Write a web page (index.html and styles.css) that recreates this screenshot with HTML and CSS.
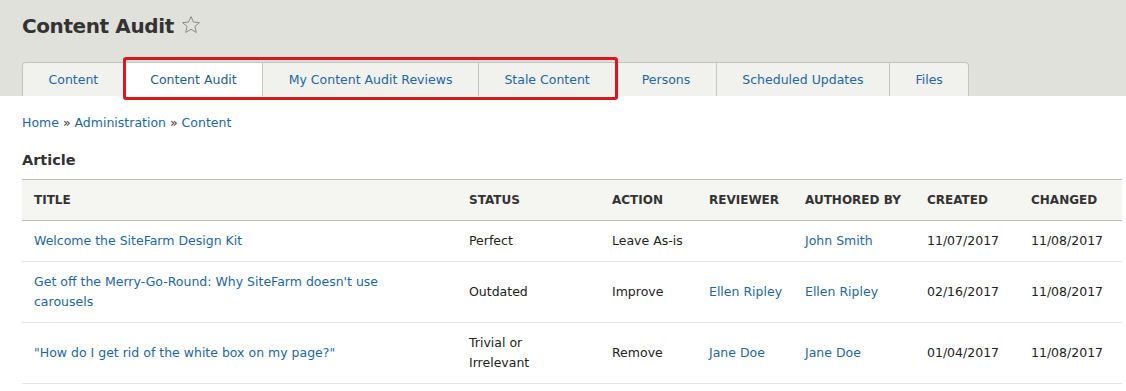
FILE: index.html
```html
<!DOCTYPE html>
<html lang="en">
<head>
<meta charset="utf-8">
<title>Content Audit</title>
<link rel="stylesheet" href="styles.css">
</head>
<body>
<header class="page-header">
  <h1 class="page-title">Content Audit
    <svg class="star" viewBox="0 0 20 20" width="20" height="20" aria-hidden="true"><path d="M10 1.6 L12.5 7.1 L18.4 7.6 L13.9 11.5 L15.3 17.4 L10 14.3 L4.7 17.4 L6.1 11.5 L1.6 7.6 L7.5 7.1 Z" fill="none" stroke="#8a8a86" stroke-width="1" stroke-linejoin="round"/></svg>
  </h1>
  <nav class="tabs">
    <a class="tab first" href="#">Content</a>
    <div class="tab-group">
      <a class="tab active" href="#">Content Audit</a>
      <a class="tab" href="#">My Content Audit Reviews</a>
      <a class="tab" href="#">Stale Content</a>
    </div>
    <a class="tab" href="#">Persons</a>
    <a class="tab" href="#">Scheduled Updates</a>
    <a class="tab last" href="#">Files</a>
  </nav>
</header>
<main class="content">
  <div class="breadcrumb"><a href="#">Home</a> » <a href="#">Administration</a> » <a href="#">Content</a></div>
  <h2 class="section-title">Article</h2>
  <table class="audit">
    <colgroup>
      <col class="c-title"><col class="c-status"><col class="c-action"><col class="c-reviewer"><col class="c-author"><col class="c-created"><col class="c-changed">
    </colgroup>
    <thead>
      <tr><th>Title</th><th>Status</th><th>Action</th><th>Reviewer</th><th>Authored by</th><th>Created</th><th>Changed</th></tr>
    </thead>
    <tbody>
      <tr>
        <td class="cell-title"><a href="#">Welcome the SiteFarm Design Kit</a></td>
        <td class="cell-status">Perfect</td><td>Leave As-is</td><td></td>
        <td><a href="#">John Smith</a></td><td>11/07/2017</td><td>11/08/2017</td>
      </tr>
      <tr>
        <td class="cell-title"><a href="#">Get off the Merry-Go-Round: Why SiteFarm doesn't use carousels</a></td>
        <td class="cell-status">Outdated</td><td>Improve</td><td><a href="#">Ellen Ripley</a></td>
        <td><a href="#">Ellen Ripley</a></td><td>02/16/2017</td><td>11/08/2017</td>
      </tr>
      <tr>
        <td class="cell-title"><a href="#">"How do I get rid of the white box on my page?"</a></td>
        <td class="cell-status">Trivial or Irrelevant</td><td>Remove</td><td><a href="#">Jane Doe</a></td>
        <td><a href="#">Jane Doe</a></td><td>01/04/2017</td><td>11/08/2017</td>
      </tr>
    </tbody>
  </table>
</main>
</body>
</html>
```
FILE: styles.css
```css
* { box-sizing: border-box; }
body {
  margin: 0;
  background: #fff;
  font-family: "DejaVu Sans", Verdana, sans-serif;
  font-size: 12.5px;
  color: #222;
}
a { color: #2267a3; text-decoration: none; }

.page-header {
  background: #e1e1db;
  padding: 0 22px;
}
.page-title {
  margin: 0;
  padding-top: 11px;
  font-size: 20px;
  letter-spacing: -0.4px;
  line-height: 30px;
  font-weight: bold;
  color: #333;
  display: flex;
  align-items: center;
  gap: 7px;
}
.star { display: block; margin-top: -2px; }

.tabs {
  display: flex;
  margin-top: 21px;
}
.tab-group {
  display: flex;
  position: relative;
}
.tab-group::after {
  content: "";
  position: absolute;
  top: -5px; bottom: -4px; left: -2px; right: -2px;
  border: 3px solid #e0141b;
  border-radius: 3px;
  pointer-events: none;
}
.tab {
  display: block;
  padding: 0 25.5px;
  height: 34px;
  line-height: 33px;
  background: #f1f1ee;
  border: 1px solid #c4c4bf;
  border-left: none;
  border-bottom: none;
  color: #2267a3;
  white-space: nowrap;
}
.tab.first { border-left: 1px solid #c4c4bf; border-top-left-radius: 4px; }
.tab.last { border-top-right-radius: 4px; }
.tab.active { background: #fff; color: #1f5d8f; }

.content { padding: 0 4px 0 22px; }
.breadcrumb {
  padding-top: 17px;
  line-height: 20px;
  color: #333;
}
.section-title {
  margin: 17px 0 9px;
  font-size: 14.5px;
  line-height: 20px;
  font-weight: bold;
  color: #333;
}
.audit {
  width: 1100px;
  border-collapse: collapse;
  table-layout: fixed;
}
.c-title { width: 435px; }
.c-status { width: 143px; }
.c-action { width: 97px; }
.c-reviewer { width: 96px; }
.c-author { width: 122px; }
.c-created { width: 104px; }
.c-changed { width: 103px; }
.audit th {
  background: #f5f5f2;
  border-top: 1px solid #bfbfba;
  border-bottom: 1px solid #bfbfba;
  text-align: left;
  text-transform: uppercase;
  font-size: 12px;
  font-weight: bold;
  color: #333;
  padding: 10px 12px;
  line-height: 20px;
  white-space: nowrap;
}
.audit td {
  padding: 10px 12px;
  line-height: 20px;
  border-bottom: 1px solid #e6e4df;
  vertical-align: middle;
  white-space: nowrap;
}
.audit td.cell-title { white-space: normal; padding-right: 32px; }
.audit td.cell-status { white-space: normal; padding-right: 24px; }
```
